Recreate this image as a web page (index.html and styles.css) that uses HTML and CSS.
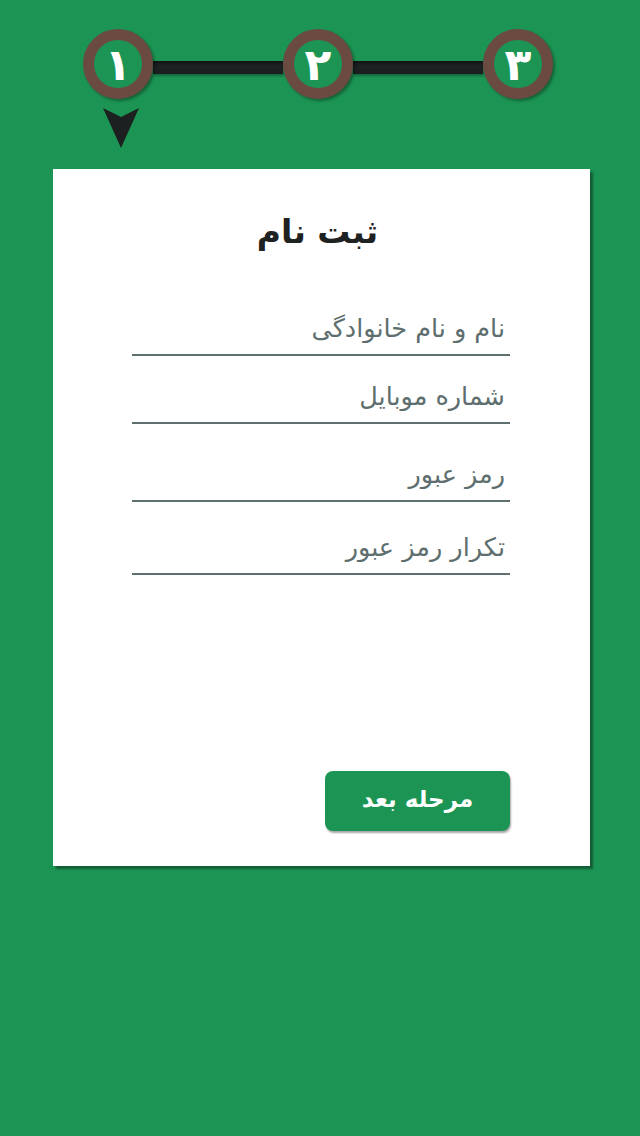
FILE: index.html
```html
<!DOCTYPE html>
<html lang="fa">
<head>
<meta charset="utf-8">
<link rel="stylesheet" href="styles.css">
</head>
<body>
<div class="page">
  <div class="steps">
    <div class="step"><span>۱</span></div>
    <div class="step-line"></div>
    <div class="step"><span>۲</span></div>
    <div class="step-line"></div>
    <div class="step"><span>۳</span></div>
  </div>
  <div class="pointer-row">
    <svg class="pointer" width="36" height="40" viewBox="0 0 36 40"><polygon points="0,0 18,9 36,0 18,40" fill="#1c2020"/></svg>
  </div>
  <div class="card" dir="rtl">
    <h1 class="title">ثبت نام</h1>
    <div class="fields">
      <input class="field" type="text" placeholder="نام و نام خانوادگی">
      <input class="field" type="text" placeholder="شماره موبایل">
      <input class="field" type="password" placeholder="رمز عبور">
      <input class="field" type="password" placeholder="تکرار رمز عبور">
    </div>
    <button class="next">مرحله بعد</button>
  </div>
</div>
</body>
</html>
```

FILE: styles.css
```css
html, body {
  margin: 0;
  padding: 0;
  background: #1c9554;
  font-family: "DejaVu Sans", "Noto Sans", sans-serif;
}
.page {
  width: 640px;
  height: 1136px;
  padding-top: 29px;
  box-sizing: border-box;
}
.steps {
  display: flex;
  align-items: center;
  margin-left: 83px;
  width: 470px;
}
.step {
  width: 70px;
  height: 70px;
  box-sizing: border-box;
  border-radius: 50%;
  border: 11px solid #6b4b41;
  background: #1c9554;
  box-shadow: 2px 2px 3px rgba(0,0,0,0.35);
  display: flex;
  align-items: center;
  justify-content: center;
  flex: none;
  position: relative;
  z-index: 1;
}
.step span {
  color: #ffffff;
  font-weight: bold;
  font-size: 44px;
  line-height: 1;
  margin-top: 2px;
}
.step-line {
  flex: 1;
  height: 13px;
  margin-top: 7px;
  background: linear-gradient(#111414, #1d2222 40%, #1a1e1e);
  box-shadow: 1px 2px 2px rgba(0,0,0,0.3);
}
.pointer-row {
  display: flex;
  padding-left: 103px;
  margin-top: 9px;
  height: 40px;
}
.pointer { display: block; }
.card {
  margin-top: 21px;
  margin-left: 53px;
  width: 537px;
  height: 697px;
  background: #ffffff;
  box-shadow: 3px 3px 2px rgba(0,0,0,0.38);
  box-sizing: border-box;
  padding: 40px 80px 35px 79px;
  display: flex;
  flex-direction: column;
  align-items: flex-start;
}
.title {
  align-self: stretch;
  text-align: center;
  margin: 0 7px 0 0;
  font-size: 33px;
  line-height: 46px;
  font-weight: bold;
  color: #1e2222;
}
.fields {
  align-self: stretch;
  display: flex;
  flex-direction: column;
  margin-top: 52px;
}
.field {
  display: block;
  width: 100%;
  height: 49px;
  box-sizing: border-box;
  border: none;
  border-bottom: 2px solid #5f6f6f;
  outline: none;
  background: transparent;
  font-family: "DejaVu Sans", sans-serif;
  font-size: 25.5px;
  color: #5e6e6e;
  padding: 0 5px 5px 5px;
  direction: rtl;
  text-align: right;
}
.field::placeholder { color: #5e6e6e; opacity: 1; }
.field:nth-child(2) { margin-top: 19px; }
.field:nth-child(3) { margin-top: 29px; }
.field:nth-child(4) { margin-top: 24px; }
.next {
  margin-top: auto;
  width: 185px;
  height: 60px;
  border: none;
  border-radius: 8px;
  background: #1c9554;
  color: #ffffff;
  font-family: "DejaVu Sans", sans-serif;
  font-weight: bold;
  font-size: 23px;
  box-shadow: 1px 2px 2px rgba(0,0,0,0.35);
  padding: 0 0 4px 0;
}
```
